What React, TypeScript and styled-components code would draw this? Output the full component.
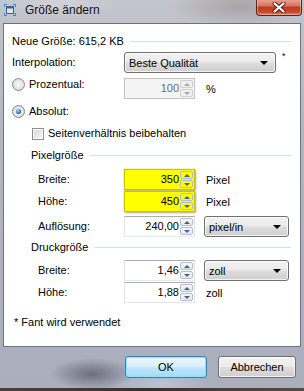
import React from 'react';
import styled, { createGlobalStyle } from 'styled-components';

const GlobalStyle = createGlobalStyle`
  html, body {
    margin: 0;
    padding: 0;
  }
  body {
    font-family: "Liberation Sans", Arial, sans-serif;
    color: #000;
  }
`;

const Window = styled.div`
  width: 304px;
  height: 391px;
  overflow: hidden;
  display: flex;
  flex-direction: column;
  background:
    radial-gradient(ellipse 42px 16px at 92px 374px, rgba(88, 88, 104, 0.75), transparent),
    radial-gradient(ellipse 50px 14px at 160px 384px, rgba(205, 208, 220, 0.6), transparent),
    radial-gradient(ellipse 70px 22px at 240px 6px, rgba(150, 136, 136, 0.55), transparent),
    radial-gradient(ellipse 60px 14px at 60px 4px, rgba(220, 222, 228, 0.6), transparent),
    linear-gradient(180deg, #c3c5cc 0%, #b4b7c1 30%, #aaaebd 100%);
`;

const TitleBar = styled.div`
  height: 23px;
  display: flex;
  align-items: flex-start;
  padding-left: 4px;
  flex-shrink: 0;
`;

const TitleIcon = styled.svg`
  margin-top: 4px;
  flex-shrink: 0;
`;

const TitleText = styled.div`
  margin: 3px 0 0 9px;
  font-size: 12px;
  line-height: 15px;
  color: #111;
`;

const CloseButton = styled.div`
  margin: -1px 2px 0 auto;
  width: 46px;
  height: 17px;
  box-sizing: border-box;
  border: 1px solid #5a2418;
  border-top: none;
  border-radius: 0 0 4px 4px;
  background: linear-gradient(180deg, #e9a796 0%, #d87560 42%, #c23a20 52%, #c9452a 78%, #de7c63 100%);
  box-shadow: inset 0 0 0 1px rgba(255, 220, 210, 0.45);
  display: flex;
  align-items: center;
  justify-content: center;
`;

const Panel = styled.div`
  margin: 0 3px;
  height: 324px;
  box-sizing: border-box;
  border: 1px solid #6d727d;
  background: #fff;
  padding-top: 10px;
  font-size: 11px;
  flex-shrink: 0;
`;

const GroupHeader = styled.div<{ $indent: number; $mt: number }>`
  display: flex;
  align-items: center;
  gap: 6px;
  height: 14px;
  margin-top: ${p => p.$mt}px;
  padding: 0 9px 0 ${p => p.$indent}px;
  white-space: nowrap;
  &::after {
    content: '';
    flex: 1;
    height: 1px;
    background: #d5dfe5;
  }
`;

const FieldRow = styled.div<{ $mt: number; $h?: number }>`
  display: grid;
  grid-template-columns: 120px 80px auto;
  align-items: center;
  height: ${p => p.$h ?? 21}px;
  margin-top: ${p => p.$mt}px;
`;

const FieldLabel = styled.div<{ $indent: number; $top?: boolean }>`
  padding-left: ${p => p.$indent}px;
  display: flex;
  align-items: center;
  gap: 4px;
  align-self: ${p => (p.$top ? 'start' : 'center')};
  line-height: 13px;
  white-space: nowrap;
`;

const WideCell = styled.div`
  grid-column: 2 / span 2;
  display: flex;
  align-items: flex-start;
  height: 21px;
`;

const Asterisk = styled.span`
  margin: 0 0 0 6px;
  font-size: 9px;
  line-height: 9px;
`;

const Unit = styled.div`
  padding-left: 2px;
`;

const Select = styled.div<{ $w: number }>`
  width: ${p => p.$w}px;
  height: 21px;
  box-sizing: border-box;
  border: 1px solid #707070;
  border-radius: 3px;
  background: linear-gradient(180deg, #f2f2f2 0%, #ebebeb 48%, #dddddd 52%, #cfcfcf 100%);
  box-shadow: inset 0 0 0 1px rgba(255, 255, 255, 0.75);
  display: flex;
  align-items: center;
  justify-content: space-between;
  padding: 0 7px 0 4px;
  &::after {
    content: '';
    border-left: 4px solid transparent;
    border-right: 4px solid transparent;
    border-top: 4px solid #000;
  }
`;

const SpinBox = styled.div<{ $hl?: boolean; $disabled?: boolean }>`
  width: 71px;
  height: 21px;
  box-sizing: border-box;
  display: flex;
  align-items: stretch;
  border: 1px solid;
  border-color: ${p =>
    p.$hl ? '#c4c400' : p.$disabled ? '#c3c3c3' : '#abadb3 #dbdfe6 #e3e9ef #e2e3ea'};
  background: ${p => (p.$hl ? '#ffff00' : p.$disabled ? '#f4f4f4' : '#fff')};
  color: ${p => (p.$disabled ? '#6d6d6d' : '#000')};
  box-shadow: ${p => (p.$hl ? '1px 1px 2px rgba(110, 110, 40, 0.55), 0 0 1px #d4d400' : 'none')};
`;

const SpinValue = styled.div`
  flex: 1;
  text-align: right;
  line-height: 19px;
  padding-right: 1px;
`;

const SpinColumn = styled.div`
  width: 13px;
  display: flex;
  flex-direction: column;
  gap: 1px;
  padding: 1px 1px 1px 0;
`;

const SpinButton = styled.div<{ $down?: boolean; $plain?: boolean; $muted?: boolean }>`
  flex: 1;
  border: 1px solid ${p => (p.$muted ? '#d0d0d0' : '#aebdd0')};
  border-radius: 2px;
  background: ${p =>
    p.$plain ? 'transparent' : p.$muted ? '#f0f0f0' : 'linear-gradient(180deg, #f5f7fa 0%, #e3e8ef 100%)'};
  display: flex;
  align-items: center;
  justify-content: center;
  &::after {
    content: '';
    border-left: 3px solid transparent;
    border-right: 3px solid transparent;
    ${p => (p.$down ? 'border-top' : 'border-bottom')}: 3px solid ${p => (p.$muted ? '#a8a8a8' : '#4c5f80')};
  }
`;

const Radio = styled.span<{ $checked?: boolean }>`
  width: 13px;
  height: 13px;
  box-sizing: border-box;
  border-radius: 50%;
  border: 1px solid #8a8a8a;
  background: radial-gradient(circle at 50% 50%, #fbfbfb 0%, #e2e2e2 60%, #cfcfcf 100%);
  display: flex;
  align-items: center;
  justify-content: center;
  flex-shrink: 0;
  &::after {
    content: '';
    width: 5px;
    height: 5px;
    border-radius: 50%;
    background: ${p =>
      p.$checked ? 'radial-gradient(circle at 40% 35%, #a6e2ff 0%, #2a7ab8 55%, #0f3e66 100%)' : 'transparent'};
  }
`;

const Checkbox = styled.span`
  width: 12px;
  height: 12px;
  box-sizing: border-box;
  border: 1px solid #8e8f8f;
  background: linear-gradient(135deg, #d8d8d8 0%, #f4f4f4 100%);
  box-shadow: inset 0 0 0 1px #fff;
  flex-shrink: 0;
`;

const Footnote = styled.div`
  margin-top: 12px;
  padding-left: 10px;
  line-height: 14px;
`;

const Footer = styled.div`
  flex: 1;
  display: flex;
  justify-content: flex-end;
  align-items: flex-start;
  gap: 11px;
  padding: 9px 8px 0 0;
`;

const Button = styled.div<{ $w: number; $default?: boolean }>`
  width: ${p => p.$w}px;
  height: 22px;
  box-sizing: border-box;
  border-radius: 3px;
  border: 1px solid ${p => (p.$default ? '#3c7fb1' : '#707070')};
  background: ${p =>
    p.$default
      ? 'linear-gradient(180deg, #eaf6fd 0%, #d9f0fc 48%, #bee6fd 52%, #a7d9f5 100%)'
      : 'linear-gradient(180deg, #f2f2f2 0%, #ebebeb 48%, #dddddd 52%, #cfcfcf 100%)'};
  box-shadow: ${p =>
    p.$default ? 'inset 0 0 0 1px #8ee0fb, 0 0 1px #7fd8ff' : 'inset 0 0 0 1px rgba(255,255,255,0.75)'};
  display: flex;
  align-items: center;
  justify-content: center;
  font-size: 11px;
`;

const BottomEdge = styled.div`
  height: 3px;
  background: linear-gradient(90deg, #4b4038 0%, #3a302b 50%, #5a4c44 100%);
  flex-shrink: 0;
`;

function Spin({ value, hl, disabled }: { value: string; hl?: boolean; disabled?: boolean }) {
  return (
    <SpinBox $hl={hl} $disabled={disabled}>
      <SpinValue>{value}</SpinValue>
      <SpinColumn>
        <SpinButton $plain={hl} $muted={disabled} />
        <SpinButton $down $plain={hl} $muted={disabled} />
      </SpinColumn>
    </SpinBox>
  );
}

export default function App() {
  return (
    <>
      <GlobalStyle />
      <Window>
        <TitleBar>
          <TitleIcon width="12" height="12" viewBox="0 0 12 12">
            <path d="M0.5 3V0.5H3M9 0.5H11.5V3M11.5 9V11.5H9M3 11.5H0.5V9" fill="none" stroke="#3a7fd8" strokeWidth="1" />
            <rect x="2.5" y="2.5" width="7" height="7" fill="#dce8f5" stroke="#4a5f80" strokeWidth="1" />
            <rect x="3" y="3" width="6" height="1.5" fill="#3d5f92" />
          </TitleIcon>
          <TitleText>Größe ändern</TitleText>
          <CloseButton>
            <svg width="14" height="11" viewBox="0 0 14 11">
              <path d="M2.5 1.5L11.5 9.5M11.5 1.5L2.5 9.5" stroke="#4a1a10" strokeWidth="4" strokeLinecap="round" />
              <path d="M2.5 1.5L11.5 9.5M11.5 1.5L2.5 9.5" stroke="#fff" strokeWidth="2.2" strokeLinecap="round" />
            </svg>
          </CloseButton>
        </TitleBar>

        <Panel>
          <GroupHeader $indent={8} $mt={0}>Neue Größe: 615,2 KB</GroupHeader>

          <FieldRow $mt={4}>
            <FieldLabel $indent={8}>Interpolation:</FieldLabel>
            <WideCell>
              <Select $w={152}>Beste Qualität</Select>
              <Asterisk>*</Asterisk>
            </WideCell>
          </FieldRow>

          <FieldRow $mt={5} $h={20}>
            <FieldLabel $indent={8} $top>
              <Radio />
              Prozentual:
            </FieldLabel>
            <Spin value="100" disabled />
            <Unit>%</Unit>
          </FieldRow>

          <FieldRow $mt={5} $h={16}>
            <FieldLabel $indent={8}>
              <Radio $checked />
              Absolut:
            </FieldLabel>
          </FieldRow>

          <FieldRow $mt={7} $h={15}>
            <FieldLabel $indent={28}>
              <Checkbox />
              Seitenverhältnis beibehalten
            </FieldLabel>
          </FieldRow>

          <GroupHeader $indent={27} $mt={7}>Pixelgröße</GroupHeader>

          <FieldRow $mt={7}>
            <FieldLabel $indent={34}>Breite:</FieldLabel>
            <Spin value="350" hl />
            <Unit>Pixel</Unit>
          </FieldRow>

          <FieldRow $mt={1}>
            <FieldLabel $indent={34}>Höhe:</FieldLabel>
            <Spin value="450" hl />
            <Unit>Pixel</Unit>
          </FieldRow>

          <FieldRow $mt={4}>
            <FieldLabel $indent={34}>Auflösung:</FieldLabel>
            <Spin value="240,00" />
            <Select $w={85}>pixel/in</Select>
          </FieldRow>

          <GroupHeader $indent={27} $mt={3}>Druckgröße</GroupHeader>

          <FieldRow $mt={6}>
            <FieldLabel $indent={34}>Breite:</FieldLabel>
            <Spin value="1,46" />
            <Select $w={85}>zoll</Select>
          </FieldRow>

          <FieldRow $mt={1}>
            <FieldLabel $indent={34}>Höhe:</FieldLabel>
            <Spin value="1,88" />
            <Unit>zoll</Unit>
          </FieldRow>

          <Footnote>* Fant wird verwendet</Footnote>
        </Panel>

        <Footer>
          <Button $w={82} $default>OK</Button>
          <Button $w={78}>Abbrechen</Button>
        </Footer>
        <BottomEdge />
      </Window>
    </>
  );
}
